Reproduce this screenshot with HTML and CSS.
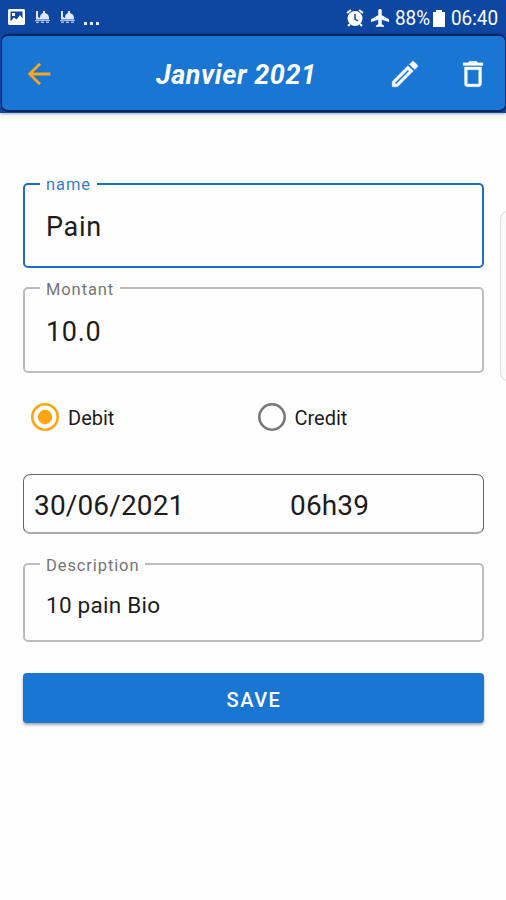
FILE: index.html
```html
<!DOCTYPE html>
<html lang="fr">
<head>
<meta charset="utf-8">
<title>Janvier 2021</title>
<link rel="stylesheet" href="styles.css">
</head>
<body>
<div class="status">
  <div class="notifications">
    <svg class="photo" width="17" height="16" viewBox="0 0 17 16"><path fill="#fff" fill-rule="evenodd" d="M1 0h15l1 1v14l-1 1H1l-1-1V1zM2.500 2.500v10l3.500-4 2.500 2 3.500-4.500 2.500 3.500v-7zM4 4h3v3H4z"/></svg>
    <svg class="dish" width="15" height="14" viewBox="0 0 15 14"><path fill="#dfe8ff" d="M1 1h2v6l2 1c0-3 1.500-4.500 3-5V1h2v2c2.500.5 4 2.500 4 5v1.500H1z"/><path fill="#a9bde6" d="M0 10h15v1H0zm1 1.500h3V13H1zm5 0h3V13H6zm5 0h3V13h-3z"/></svg>
    <svg class="dish" width="15" height="14" viewBox="0 0 15 14"><path fill="#dfe8ff" d="M1 1h2v6l2 1c0-3 1.500-4.500 3-5V1h2v2c2.500.5 4 2.500 4 5v1.500H1z"/><path fill="#a9bde6" d="M0 10h15v1H0zm1 1.500h3V13H1zm5 0h3V13H6zm5 0h3V13h-3z"/></svg>
    <svg class="more" width="15" height="3" viewBox="0 0 15 3"><path fill="#e8efff" d="M0 0h3v3H0zm6 0h3v3H6zm6 0h3v3h-3z"/></svg>
  </div>
  <div class="system">
    <svg width="18" height="18" viewBox="0 0 18 18"><circle cx="9" cy="9.500" r="7.500" fill="#fff"/><path fill="none" stroke="#fff" stroke-width="2" d="M1 4l4-3M17 4l-4-3M4 15l-2 2M14 15l2 2"/><path fill="none" stroke="#0d47a1" stroke-width="1.500" d="M9 5v5l3 2"/></svg>
    <svg class="plane" width="18" height="18" viewBox="2 2 20 20"><path fill="#fff" stroke="#fff" stroke-width=".8" d="M22 16v-2l-8.500-5V3.500C13.500 2.670 12.830 2 12 2s-1.500.67-1.500 1.500V9L2 14v2l8.500-2.500V19L8 20.500V22l4-1 4 1v-1.500L13.500 19v-5.500z"/></svg>
    <span class="battery-text"><span class="narrow">88%</span></span>
    <svg class="battery" width="12" height="17" viewBox="0 0 12 17"><path fill="#fff" d="M3 0h6v2h3v15H0V2h3z"/></svg>
    <span class="clock"><span class="narrow">06:40</span></span>
  </div>
</div>
<header class="bar-wrap">
  <div class="bar">
    <svg class="back" width="34" height="34" viewBox="0 0 24 24"><path fill="#f5a623" d="M20 11H7.830l5.590-5.590L12 4l-8 8 8 8 1.410-1.410L7.830 13H20z"/></svg>
    <h1>Janvier 2021</h1>
    <svg class="edit" width="34" height="34" viewBox="0 0 24 24"><path fill="#fff" stroke="#fff" stroke-width=".3" d="M14.060 9.020l.92.92L5.920 19H5v-.92l9.060-9.060M17.660 3c-.25 0-.51.1-.7.290l-1.830 1.830 3.750 3.750 1.830-1.830c.39-.39.39-1.020 0-1.410l-2.340-2.340c-.2-.2-.45-.29-.71-.29zm-3.600 3.190L3 17.250V21h3.750L17.810 9.940l-3.750-3.750z"/></svg>
    <svg class="trash" width="34" height="34" viewBox="0 0 24 24"><path fill="#fff" stroke="#fff" stroke-width=".2" d="M6 19c0 1.100.9 2 2 2h8c1.100 0 2-.9 2-2V7H6v12zM8 9h8v10H8V9zm7.500-5l-1-1h-5l-1 1H5v2h14V4z"/></svg>
  </div>
</header>
<main class="form">
  <div class="field focused"><span class="label">name</span><span class="value">Pain</span></div>
  <div class="field amount"><span class="label">Montant</span><span class="value">10.0</span></div>
  <div class="radios">
    <div class="radio"><svg width="28" height="28" viewBox="0 0 28 28"><circle cx="14" cy="14" r="12.700" fill="none" stroke="#ffa510" stroke-width="2.600"/><circle cx="14" cy="14" r="7.200" fill="#ffa510"/></svg><span>Debit</span></div>
    <div class="radio"><svg width="28" height="28" viewBox="0 0 28 28"><circle cx="14" cy="14" r="12.700" fill="none" stroke="#757575" stroke-width="2.500"/></svg><span>Credit</span></div>
  </div>
  <div class="datetime"><span class="date">30/06/2021</span><span class="time">06h39</span></div>
  <div class="field description"><span class="label">Description</span><span class="value">10 pain Bio</span></div>
  <button class="save">SAVE</button>
</main>
<div class="edge-handle"></div>
</body>
</html>
```
FILE: styles.css
```css
* { box-sizing: border-box; }
body {
  margin: 0;
  height: 900px;
  position: relative;
  overflow: hidden;
  background: #fefefe;
  color: #1c1c1c;
  font-family: Roboto, "Liberation Sans", sans-serif;
}
svg { display: block; flex: none; }
.status {
  height: 34px;
  padding: 0 8px 0 8px;
  display: flex;
  justify-content: space-between;
  background: #0d47a1;
  color: #fff;
}
.notifications { display: flex; align-items: flex-start; padding-top: 9px; }
.dish { margin: 1px 0 0 10px; }
.dish + .dish { margin-left: 10px; }
.more { margin: 13px 0 0 9px; }
.system { display: flex; align-items: center; height: 36px; font-size: 21px; line-height: 36px; }
.plane { margin-left: 7px; }
.battery-text { width: 34px; margin-left: 6px; }
.battery { margin-left: 4px; }
.clock { width: 47px; margin-left: 6px; }
.narrow { display: inline-block; transform: scaleX(.9); transform-origin: left; }
.bar-wrap { height: 79px; background: #0d47a1; box-shadow: 0 1px 3px rgba(0,0,0,.35); }
.bar {
  height: 78px;
  margin-left: 1px;
  padding-left: 20px;
  display: flex;
  align-items: center;
  border: 2px solid #0a2360;
  border-width: 2px 1px 2px 1px;
  border-radius: 7px;
  background: #1976d2;
}
.back { margin-top: 1px; }
h1 {
  width: 162px;
  margin: 3px 0 0 100px;
  color: #fff;
  font-size: 27px;
  line-height: 32px;
  font-weight: 700;
  font-style: italic;
  letter-spacing: .55px;
  white-space: nowrap;
}
.edit { margin: 1px 0 0 70px; }
.trash { margin: 1px 0 0 34px; }
.form { padding: 70px 22px 0 23px; display: flex; flex-direction: column; }
.field {
  position: relative;
  height: 86px;
  padding-left: 21px;
  display: flex;
  align-items: center;
  border: 2px solid #bdbdbd;
  border-radius: 5px;
}
.focused { height: 85px; border: 2px solid #1d6dc7; }
.label {
  position: absolute;
  left: 15px;
  top: -10px;
  padding: 0 6px;
  background: #fefefe;
  color: #757575;
  font-size: 16.500px;
  line-height: 20px;
  letter-spacing: .9px;
}
.amount .label, .description .label { top: -9px; }
.focused .label { color: #397dc9; }
.value { font-size: 27px; line-height: 34px; letter-spacing: .7px; margin-top: 3px; }
.amount { margin-top: 19px; }
.radios { height: 28px; margin: 30px 0 0 8px; display: flex; }
.radio { width: 228px; display: flex; align-items: center; gap: 9px; font-size: 20px; }
.radio span { margin-top: 2px; }
.datetime {
  height: 60px;
  margin-top: 43px;
  padding-left: 10px;
  display: flex;
  align-items: center;
  border: 1px solid #666;
  border-bottom: 2px solid #aaa;
  border-radius: 7px;
  font-size: 28px;
  letter-spacing: .15px;
}
.datetime span { margin-top: 3px; }
.date { width: 256px; }
.description { height: 79px; margin-top: 29px; }
.description .value { font-size: 22.500px; letter-spacing: .25px; margin-top: 4px; }
.save {
  height: 50px;
  margin-top: 31px;
  padding: 3px 0 0 1px;
  border: 0;
  border-radius: 4px;
  background: #1976d2;
  box-shadow: 0 2px 3px rgba(0,0,0,.35);
  color: #fff;
  font-family: inherit;
  font-size: 20px;
  font-weight: 500;
  letter-spacing: 1.500px;
}
.edge-handle {
  position: absolute;
  right: -10px;
  top: 211px;
  width: 16px;
  height: 170px;
  border: 1px solid #ddd;
  border-radius: 8px;
  background: #fafafa;
}
```
